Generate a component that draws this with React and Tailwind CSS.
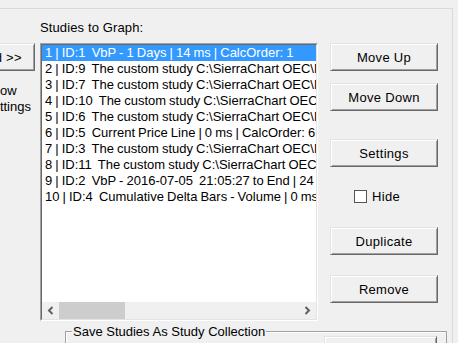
import React from "react";

const rows = [
  "1 | ID:1  VbP - 1 Days | 14 ms | CalcOrder: 1",
  "2 | ID:9  The custom study C:\\SierraChart OEC\\Data\\Custom.dll",
  "3 | ID:7  The custom study C:\\SierraChart OEC\\Data\\Custom.dll",
  "4 | ID:10  The custom study C:\\SierraChart OEC\\Data\\Custom.dll",
  "5 | ID:6  The custom study C:\\SierraChart OEC\\Data\\Custom.dll",
  "6 | ID:5  Current Price Line | 0 ms | CalcOrder: 6",
  "7 | ID:3  The custom study C:\\SierraChart OEC\\Data\\Custom.dll",
  "8 | ID:11  The custom study C:\\SierraChart OEC\\Data\\Custom.dll",
  "9 | ID:2  VbP - 2016-07-05  21:05:27 to End | 24 ms | CalcOrder: 9",
  "10 | ID:4  Cumulative Delta Bars - Volume | 0 ms | CalcOrder: 10",
];

const btn =
  "flex items-center justify-center h-[28px] bg-[#f0f0f0] border border-t-[#e3e3e3] border-l-[#e3e3e3] border-r-[#696969] border-b-[#696969] shadow-[inset_1px_1px_0_#ffffff,inset_-1px_-1px_0_#a0a0a0] text-black leading-[15px] tracking-[0.3px] whitespace-nowrap";

function Chevron({ dir }) {
  return (
    <svg width="7" height="9" viewBox="0 0 7 9">
      {dir === "left" ? (
        <path d="M5.5 1 L2 4.5 L5.5 8" fill="none" stroke="#606060" strokeWidth="2" />
      ) : (
        <path d="M1.5 1 L5 4.5 L1.5 8" fill="none" stroke="#606060" strokeWidth="2" />
      )}
    </svg>
  );
}

export default function App() {
  return (
    <div
      className="w-[458px] h-[343px] overflow-hidden bg-[#f0f0f0] text-[13px] text-black"
      style={{ fontFamily: '"Liberation Sans", Arial, sans-serif' }}
    >
      <div className="mt-[8px] w-[453px] h-[335px] border-t border-r border-[#d9d9d9] flex flex-col">
        <div className="flex h-[312px] shrink-0">
          {/* left column */}
          <div className="w-[40px] shrink-0 flex flex-col">
            <div className={btn + " mt-[34px] w-[70px] -ml-[35px]"}>Add &gt;&gt;</div>
            <div className="mt-[12px] -ml-[16px] leading-[16px] whitespace-nowrap">
              <div>Show</div>
              <div>Settings</div>
            </div>
          </div>

          {/* middle column */}
          <div className="w-[278px] shrink-0 pt-[11px] flex flex-col">
            <div className="leading-[15px] whitespace-nowrap tracking-[0.12px]">Studies to Graph:</div>
            <div className="mt-[8px] h-[278px] border border-t-[#a0a0a0] border-l-[#a0a0a0] border-r-[#ffffff] border-b-[#ffffff]">
              <div className="h-full border border-t-[#696969] border-l-[#696969] border-r-[#e3e3e3] border-b-[#e3e3e3] flex flex-col">
                <div className="flex-1 bg-white overflow-hidden">
                  {rows.map((r, i) => (
                    <div
                      key={i}
                      className={
                        "h-[16px] leading-[16px] pl-[3px] whitespace-pre overflow-hidden [word-spacing:-0.55px] " +
                        (i === 0 ? "bg-[#3399ff] text-white" : "text-black")
                      }
                    >
                      {r}
                    </div>
                  ))}
                </div>
                <div className="h-[17px] shrink-0 bg-[#f0f0f0] flex">
                  <div className="w-[17px] flex items-center justify-center">
                    <Chevron dir="left" />
                  </div>
                  <div className="w-[66px] bg-[#cdcdcd]" />
                  <div className="flex-1" />
                  <div className="w-[17px] flex items-center justify-center">
                    <Chevron dir="right" />
                  </div>
                </div>
              </div>
            </div>
          </div>

          {/* right column */}
          <div className="ml-[12px] w-[108px] shrink-0 flex flex-col">
            <div className={btn + " mt-[34px]"}>Move Up</div>
            <div className={btn + " mt-[12px]"}>Move Down</div>
            <div className={btn + " mt-[28px]"}>Settings</div>
            <div className="mt-[22px] h-[15px] flex items-center pl-[24px]">
              <div className="w-[13px] h-[13px] bg-white border border-[#555555]" />
              <span className="ml-[5px] leading-[15px] tracking-[0.3px]">Hide</span>
            </div>
            <div className={btn + " mt-[23px]"}>Duplicate</div>
            <div className={btn + " mt-[20px]"}>Remove</div>
          </div>
        </div>

        {/* group box */}
        <div className="mt-[10px] ml-[65px] w-[382px] h-[30px] shrink-0 border-t border-l border-r border-[#a0a0a0] shadow-[inset_1px_1px_0_#ffffff] flex items-start">
          <span className="ml-[6px] -mt-[8px] px-[1px] bg-[#f0f0f0] leading-[15px] whitespace-nowrap">
            Save Studies As Study Collection
          </span>
          <div className={btn + " ml-auto mr-[9px] mt-[4px] w-[113px]"}>Save</div>
        </div>
      </div>
    </div>
  );
}
